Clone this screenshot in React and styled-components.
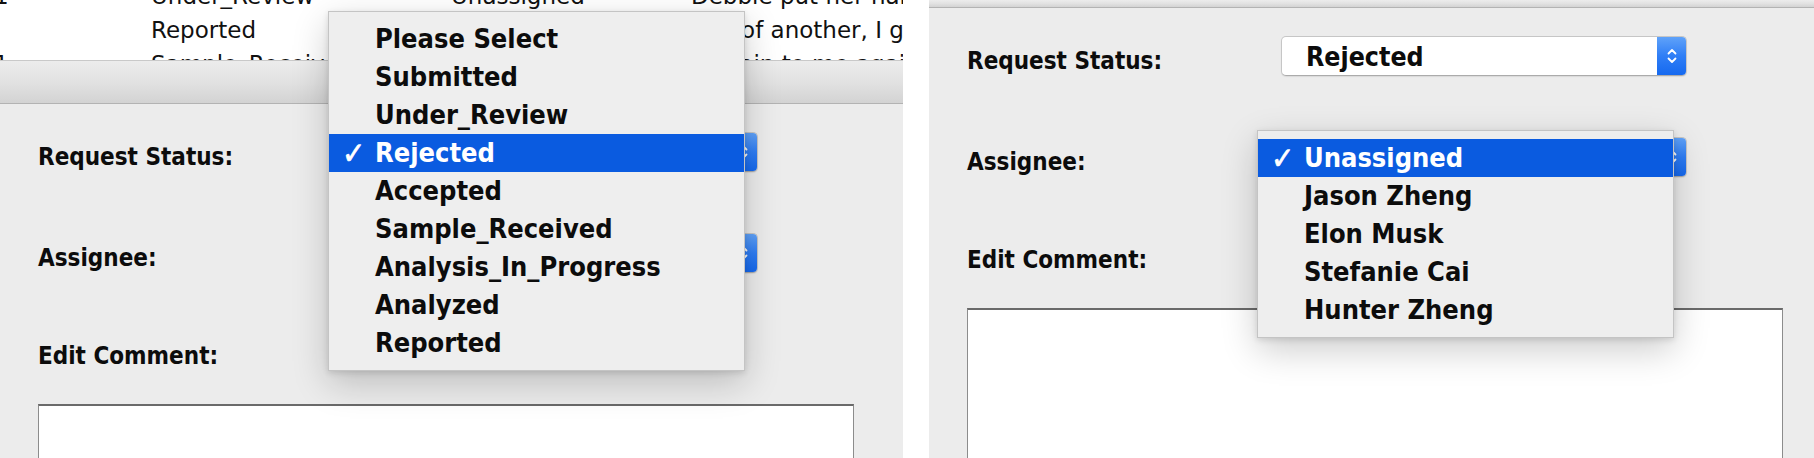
import React from "react";
import styled, { createGlobalStyle } from "styled-components";

const GlobalStyle = createGlobalStyle`
  html, body { margin: 0; padding: 0; background: #ffffff; }
  body { width: 1814px; height: 458px; overflow: hidden; }
  * { box-sizing: border-box; }
`;

const UI_FONT = `"DejaVu Sans Condensed", "DejaVu Sans", sans-serif`;
const TABLE_FONT = `"DejaVu Sans", "Liberation Sans", sans-serif`;

const Page = styled.div`
  display: flex;
  width: 1814px;
  height: 458px;
  gap: 26px;
  background: #ffffff;
`;

const Shot = styled.div`
  position: relative;
  display: flex;
  flex-direction: column;
  overflow: hidden;
  height: 458px;
  ${(p) => (p.$width ? `width: ${p.$width}px; flex: none;` : `flex: 1;`)}
`;

/* background table of the main window */
const TableArea = styled.div`
  height: 60px;
  flex: none;
  overflow: hidden;
  background: #ffffff;
`;

const TableRows = styled.div`
  margin-top: -21px;
`;

const TableRow = styled.div`
  display: grid;
  grid-template-columns: 151px 300px 240px 1fr;
  height: 34px;
  line-height: 34px;
  font-family: ${TABLE_FONT};
  font-size: 23px;
  color: #111;
  white-space: nowrap;
`;

const Cell = styled.div`
  overflow: hidden;
  ${(p) => (p.$first ? `text-indent: -6px; overflow: visible;` : ``)}
`;

const TitleBar = styled.div`
  flex: none;
  height: ${(p) => p.$h}px;
  background: linear-gradient(180deg, #ececec 0%, #e2e2e2 50%, #d3d3d3 100%);
  border-top: ${(p) => (p.$top ? "1px solid #c9c9c9" : "none")};
  border-bottom: 1px solid #b3b3b3;
`;

const DialogBody = styled.div`
  flex: 1;
  background: #ececec;
  padding: 28px 0 0 38px;
  display: flex;
  flex-direction: column;
`;

const FieldRow = styled.div`
  display: flex;
  align-items: center;
  height: 40px;
  margin-bottom: ${(p) => p.$gap}px;
`;

const Label = styled.div`
  width: 314px;
  flex: none;
  margin-top: ${(p) => p.$shift ?? 10}px;
  font-family: ${UI_FONT};
  font-stretch: condensed;
  font-weight: 700;
  font-size: 24px;
  color: #0c0c0c;
`;

const SelectWrap = styled.div`
  position: relative;
  width: 406px;
  height: 40px;
  flex: none;
`;

const Combo = styled.div`
  display: flex;
  align-items: center;
  height: 40px;
  background: #ffffff;
  border: 1px solid #c6c6c6;
  border-bottom-color: #ababab;
  border-radius: 5px;
  box-shadow: 0 1px 1px rgba(0, 0, 0, 0.08);
  overflow: hidden;
`;

const ComboText = styled.div`
  flex: 1;
  padding-left: 24px;
  font-family: ${UI_FONT};
  font-stretch: condensed;
  font-weight: 700;
  font-size: 26.5px;
  color: #0c0c0c;
  white-space: nowrap;
`;

const Stepper = styled.div`
  width: 30px;
  height: 40px;
  margin: -1px -1px -1px 0;
  display: flex;
  align-items: center;
  justify-content: center;
  background: linear-gradient(180deg, #62a4f9 0%, #2f7ef6 50%, #1468ef 100%);
  border-radius: 0 5px 5px 0;
`;

const Menu = styled.div`
  position: absolute;
  left: -24px;
  top: ${(p) => 1 - 8 - p.$index * 38}px;
  width: 417px;
  padding: 8px 0;
  background: #eeeeee;
  border: 1px solid #c4c4c4;
  box-shadow: 0 12px 34px rgba(0, 0, 0, 0.2), 0 2px 6px rgba(0, 0, 0, 0.12);
  z-index: 10;
`;

const MenuItem = styled.div`
  position: relative;
  height: 38px;
  line-height: 38px;
  padding-left: 46px;
  font-family: ${UI_FONT};
  font-stretch: condensed;
  font-weight: 700;
  font-size: 27px;
  white-space: nowrap;
  color: ${(p) => (p.$active ? "#ffffff" : "#0c0c0c")};
  background: ${(p) => (p.$active ? "#0a5be0" : "transparent")};
`;

const Check = styled.span`
  position: absolute;
  left: 13px;
  top: 0;
  font-family: "DejaVu Sans", sans-serif;
  font-weight: 700;
  font-size: 31px;
  -webkit-text-stroke: 0.6px #ffffff;
`;

const CommentLabelRow = styled.div`
  display: flex;
  align-items: center;
  height: 40px;
  margin-bottom: 30px;
`;

const TextArea = styled.div`
  width: 816px;
  flex: 1;
  background: #ffffff;
  border: 1px solid #8c8c8c;
  border-top: 2px solid #6a6a6a;
  border-bottom: none;
`;

const Chevrons = () => (
  <svg width="12" height="22" viewBox="0 0 12 22" fill="none">
    <path d="M2.5 8.5 L6 5 L9.5 8.5" stroke="#fff" strokeWidth="1.8" strokeLinecap="round" strokeLinejoin="round" />
    <path d="M2.5 13.5 L6 17 L9.5 13.5" stroke="#fff" strokeWidth="1.8" strokeLinecap="round" strokeLinejoin="round" />
  </svg>
);

const STATUS = [
  "Please Select",
  "Submitted",
  "Under_Review",
  "Rejected",
  "Accepted",
  "Sample_Received",
  "Analysis_In_Progress",
  "Analyzed",
  "Reported",
];

const PEOPLE = ["Unassigned", "Jason Zheng", "Elon Musk", "Stefanie Cai", "Hunter Zheng"];

const Select = ({ options, value, open }) => {
  const idx = options.indexOf(value);
  return (
    <SelectWrap>
      <Combo>
        <ComboText>{value}</ComboText>
        <Stepper>
          <Chevrons />
        </Stepper>
      </Combo>
      {open && (
        <Menu $index={idx}>
          {options.map((o, i) => (
            <MenuItem key={o} $active={i === idx}>
              {i === idx && <Check>✓</Check>}
              {o}
            </MenuItem>
          ))}
        </Menu>
      )}
    </SelectWrap>
  );
};

const Dialog = ({ openField }) => (
  <DialogBody>
    <FieldRow $gap={61}>
      <Label>Request Status:</Label>
      <Select options={STATUS} value="Rejected" open={openField === "status"} />
    </FieldRow>
    <FieldRow $gap={61}>
      <Label>Assignee:</Label>
      <Select options={PEOPLE} value="Unassigned" open={openField === "assignee"} />
    </FieldRow>
    <CommentLabelRow>
      <Label $shift={4}>Edit Comment:</Label>
    </CommentLabelRow>
    <TextArea />
  </DialogBody>
);

const ROWS = [
  ["1", "Under_Review", "Unassigned", "Debbie put her name in"],
  ["", "Reported", "Unassigned", "one of another, I got it"],
  ["1", "Sample_Received", "Unassigned", "explain to me again"],
];

export default function App() {
  return (
    <>
      <GlobalStyle />
      <Page>
        <Shot $width={903}>
          <TableArea>
            <TableRows>
              {ROWS.map((r, i) => (
                <TableRow key={i}>
                  <Cell $first>{r[0]}</Cell>
                  <Cell>{r[1]}</Cell>
                  <Cell>{r[2]}</Cell>
                  <Cell>{r[3]}</Cell>
                </TableRow>
              ))}
            </TableRows>
          </TableArea>
          <TitleBar $h={44} $top />
          <Dialog openField="status" />
        </Shot>
        <Shot>
          <TitleBar $h={8} />
          <Dialog openField="assignee" />
        </Shot>
      </Page>
    </>
  );
}
